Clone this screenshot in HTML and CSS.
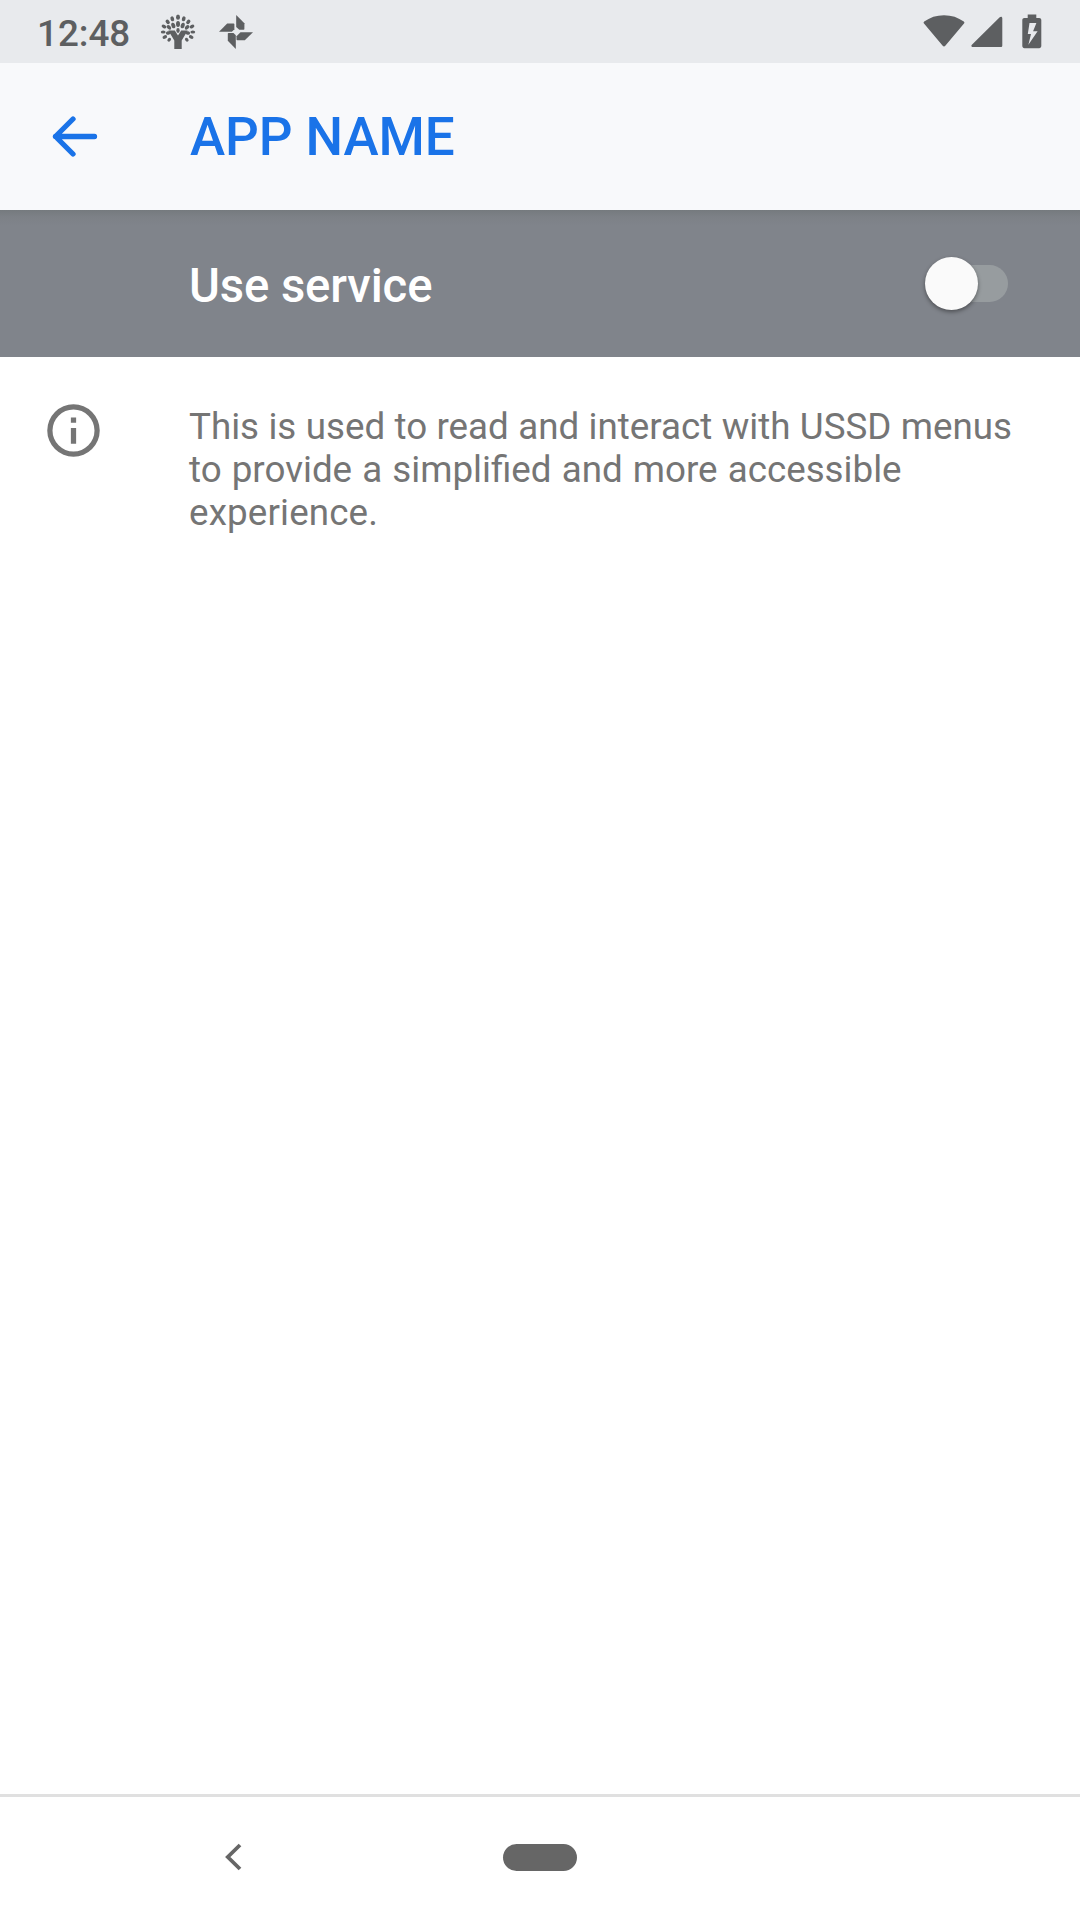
FILE: index.html
```
<!DOCTYPE html>
<html lang="en">
<head>
<meta charset="utf-8">
<title>APP NAME</title>
<link rel="stylesheet" href="styles.css">
</head>
<body>
<header class="status-bar">
  <span class="clock">12:48</span>
  <svg class="tree" width="36" height="36" viewBox="0 0 36 36" fill="currentColor" aria-hidden="true">
    <path d="M8.300 16.500h6.500l3.200 5 3.200-5h6.500l-6 10V35h-7.400v-8.500z"/>
    <ellipse cx="18" cy="3.200" rx="2" ry="2.600"/>
    <ellipse cx="18" cy="10" rx="2" ry="2.900"/>
    <ellipse cx="18" cy="16.500" rx="1.700" ry="2.400"/>
    <ellipse cx="12.300" cy="4.800" rx="1.800" ry="2.500" transform="rotate(-20 12.300 4.800)"/>
    <ellipse cx="23.700" cy="4.800" rx="1.800" ry="2.500" transform="rotate(20 23.700 4.800)"/>
    <ellipse cx="13.300" cy="11.500" rx="1.900" ry="2.900" transform="rotate(-20 13.300 11.500)"/>
    <ellipse cx="22.700" cy="11.500" rx="1.900" ry="2.900" transform="rotate(20 22.700 11.500)"/>
    <ellipse cx="7.700" cy="7.800" rx="1.800" ry="2.500" transform="rotate(-40 7.700 7.800)"/>
    <ellipse cx="28.300" cy="7.800" rx="1.800" ry="2.500" transform="rotate(40 28.300 7.800)"/>
    <ellipse cx="8.900" cy="13.300" rx="1.800" ry="2.700" transform="rotate(-45 8.900 13.300)"/>
    <ellipse cx="27.100" cy="13.300" rx="1.800" ry="2.700" transform="rotate(45 27.100 13.300)"/>
    <ellipse cx="4" cy="12.500" rx="1.700" ry="2.500" transform="rotate(-60 4 12.500)"/>
    <ellipse cx="32" cy="12.500" rx="1.700" ry="2.500" transform="rotate(60 32 12.500)"/>
    <ellipse cx="3.200" cy="18" rx="2.400" ry="1.600"/>
    <ellipse cx="32.800" cy="18" rx="2.400" ry="1.600"/>
    <ellipse cx="8.200" cy="19" rx="2.300" ry="1.700" transform="rotate(-15 8.200 19)"/>
    <ellipse cx="27.800" cy="19" rx="2.300" ry="1.700" transform="rotate(15 27.800 19)"/>
    <ellipse cx="4.800" cy="23" rx="2.400" ry="1.700" transform="rotate(-25 4.800 23)"/>
    <ellipse cx="31.200" cy="23" rx="2.400" ry="1.700" transform="rotate(25 31.200 23)"/>
    <ellipse cx="9.200" cy="25.700" rx="2.100" ry="1.600" transform="rotate(-50 9.200 25.700)"/>
    <ellipse cx="26.800" cy="25.700" rx="2.100" ry="1.600" transform="rotate(50 26.800 25.700)"/>
  </svg>
  <svg class="pinwheel" width="36" height="36" viewBox="0 0 36 36" fill="currentColor" aria-hidden="true">
    <path d="M18.200 1l8.200 8.200v5.800q0 .8-.8.800h-4.300L18.200 13z"/>
    <path d="M35 18.200l-8.200 8h-7.500q-.8 0-.8-.8v-3.200l4-4z"/>
    <path d="M17.800 35l-8-8.200v-7q0-.8.800-.8h4.900l2.300 2.300z"/>
    <path d="M1 17.800l8.200-8.200h6.400q.8 0 .8.800v4.900l-2.500 2.500z"/>
  </svg>
  <div class="indicators">
    <svg width="42" height="36" viewBox="0 0 42 36" fill="currentColor" aria-hidden="true">
      <path d="M1.200 7.600C6.800 3.400 13.500 1.200 21 1.200s14.200 2.200 19.800 6.400c.7.500.8 1.300.2 2L22.300 31.800c-.7.900-1.900.9-2.600 0L1 9.600c-.6-.7-.5-1.500.2-2z"/>
    </svg>
    <svg class="signal" width="32" height="36" viewBox="0 0 32 36" fill="currentColor" aria-hidden="true">
      <path d="M31.300 4.300v27.200c0 1-.6 1.600-1.600 1.600H1.900c-1.500 0-2-1.400-1-2.400L28.700 3.300c1.200-1.100 2.600-.6 2.600 1z"/>
    </svg>
    <svg class="battery" width="20" height="36" viewBox="0 0 20 36" fill="currentColor" fill-rule="evenodd" aria-hidden="true">
      <path d="M5.700 .5h8.600v3.500h2.900c1.200 0 2.100.9 2.100 2.100v26c0 1.200-.9 2.100-2.100 2.100H2.400c-1.200 0-2.100-.9-2.100-2.100v-26c0-1.200.9-2.100 2.100-2.100h3.300zM7.500 9L5.800 20H9L6.400 30.800l9.200-13.500h-4.500l3.300-8.300z"/>
    </svg>
  </div>
</header>
<nav class="app-bar">
  <svg class="back" width="63" height="63" viewBox="0 0 63 63" fill="none" stroke="currentColor" stroke-width="5.300" stroke-linecap="round" stroke-linejoin="round" aria-label="Back">
    <path d="M52.500 31.500H13.500M31 14L13.500 31.500 31 49"/>
  </svg>
  <h1 class="title">APP NAME</h1>
</nav>
<section class="switch-bar">
  <span class="switch-label">Use service</span>
  <span class="switch" role="switch" aria-checked="false"><span class="thumb"></span></span>
</section>
<main class="content">
  <svg class="info" width="63" height="63" viewBox="0 0 24 24" fill="currentColor" aria-hidden="true">
    <path d="M11 17h2v-6h-2zM12 2a10 10 0 1 0 0 20 10 10 0 0 0 0-20zm0 18a8 8 0 1 1 0-16 8 8 0 0 1 0 16zM11 9h2V7h-2z"/>
  </svg>
  <p class="description">This is used to read and interact with USSD menus<br><span class="loose">to provide a simplified and more accessible</span><br><span class="tracked">experience.</span></p>
</main>
<footer class="nav-bar">
  <svg class="nav-back" width="20" height="30" viewBox="0 0 20 30" fill="none" stroke="currentColor" stroke-width="3.800" aria-hidden="true">
    <path d="M16 3L3.800 15 16 27"/>
  </svg>
  <span class="home"></span>
</footer>
</body>
</html>
```
FILE: styles.css
```
* { box-sizing: border-box; }

body {
  margin: 0;
  height: 1920px;
  display: flex;
  flex-direction: column;
  overflow: hidden;
  background: #fff;
  font-family: Roboto, sans-serif;
}

svg { display: block; flex: none; }

.status-bar {
  height: 63px;
  padding: 0 38px 0 37px;
  display: flex;
  align-items: center;
  background: #e8eaed;
  color: #5d5f61;
}

.clock {
  width: 123px;
  padding-top: 3px;
  font-size: 36.75px;
  font-weight: 500;
  line-height: 43px;
}

.tree { margin-top: 1px; }
.pinwheel { margin-left: 22px; }

.indicators {
  margin-left: auto;
  display: flex;
}

.signal { margin-left: 6px; }
.battery { margin-left: 19px; }

.app-bar {
  height: 147px;
  padding-left: 42px;
  display: flex;
  align-items: center;
  background: #f8f9fb;
  color: #1a73e8;
}

.title {
  margin: 0 0 0 85px;
  font-size: 53px;
  font-weight: 500;
  line-height: 72px;
  letter-spacing: -0.1px;
}

.switch-bar {
  height: 147px;
  padding: 0 72px 0 189px;
  display: flex;
  align-items: center;
  justify-content: space-between;
  background: linear-gradient(#757a7e, #7d8187 7px, #80848b 16px);
  color: #fff;
}

.switch-label {
  padding-top: 6px;
  font-size: 47.25px;
  font-weight: 500;
  line-height: 55px;
  letter-spacing: -0.1px;
}

.switch {
  width: 83px;
  height: 37px;
  display: flex;
  align-items: center;
  border-radius: 19px;
  background: linear-gradient(90deg, transparent 26px, #979c9f 26px);
}

.thumb {
  width: 53px;
  height: 53px;
  flex: none;
  border-radius: 50%;
  background: #fafafa;
  box-shadow: 0 2px 4px rgba(0, 0, 0, 0.4);
}

.content {
  flex: 1;
  padding: 42px 42px 0;
  display: flex;
  align-items: flex-start;
  color: #757575;
}

.description {
  margin: 6px 0 0 84px;
  font-size: 36.75px;
  line-height: 43px;
  white-space: nowrap;
  word-spacing: 0.25px;
}

.loose { word-spacing: 1px; }
.tracked { letter-spacing: 0.15px; }

.nav-bar {
  height: 126px;
  padding: 0 0 3px 224px;
  display: flex;
  align-items: center;
  border-top: 3px solid #e0e0e0;
  color: #666;
}

.home {
  width: 74px;
  height: 27px;
  margin-left: 259px;
  border-radius: 14px;
  background: currentColor;
}
```
